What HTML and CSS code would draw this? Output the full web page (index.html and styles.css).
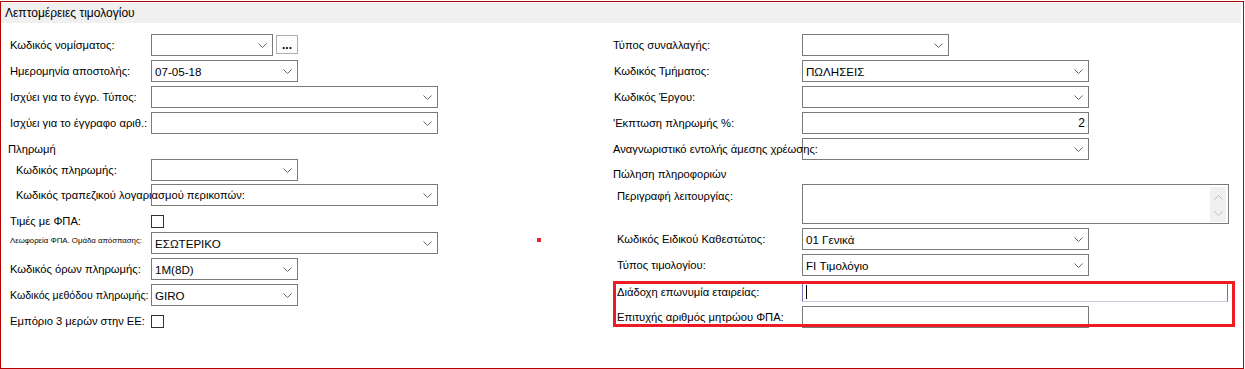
FILE: index.html
```html
<!DOCTYPE html>
<html lang="el">
<head>
<meta charset="utf-8">
<title>Λεπτομέρειες τιμολογίου</title>
<link rel="stylesheet" href="styles.css">
</head>
<body>
<div class="frame">
  <div class="header">Λεπτομέρειες τιμολογίου</div>
  <div class="body">
    <div class="col left">
      <div class="row">
        <span class="lbl">Κωδικός νομίσματος:</span>
        <span class="combo w122"><span class="val"></span><svg class="arr" width="9" height="5" viewBox="0 0 9 5"><path d="M0.5 0.5 L4.5 4.5 L8.5 0.5" /></svg></span>
        <span class="btn">...</span>
      </div>
      <div class="row">
        <span class="lbl">Ημερομηνία αποστολής:</span>
        <span class="combo w147"><span class="val">07-05-18</span><svg class="arr" width="9" height="5" viewBox="0 0 9 5"><path d="M0.5 0.5 L4.5 4.5 L8.5 0.5" /></svg></span>
      </div>
      <div class="row">
        <span class="lbl">Ισχύει για το έγγρ. Τύπος:</span>
        <span class="combo w287"><span class="val"></span><svg class="arr" width="9" height="5" viewBox="0 0 9 5"><path d="M0.5 0.5 L4.5 4.5 L8.5 0.5" /></svg></span>
      </div>
      <div class="row">
        <span class="lbl">Ισχύει για το έγγραφο αριθ.:</span>
        <span class="combo w287"><span class="val"></span><svg class="arr" width="9" height="5" viewBox="0 0 9 5"><path d="M0.5 0.5 L4.5 4.5 L8.5 0.5" /></svg></span>
      </div>
      <div class="section sec-left">Πληρωμή</div>
      <div class="row mb3">
        <span class="lbl ind6">Κωδικός πληρωμής:</span>
        <span class="combo w147"><span class="val"></span><svg class="arr" width="9" height="5" viewBox="0 0 9 5"><path d="M0.5 0.5 L4.5 4.5 L8.5 0.5" /></svg></span>
      </div>
      <div class="row">
        <span class="lbl ind6">Κωδικός τραπεζικού λογαριασμού περικοπών:</span>
        <span class="combo w287"><span class="val"></span><svg class="arr" width="9" height="5" viewBox="0 0 9 5"><path d="M0.5 0.5 L4.5 4.5 L8.5 0.5" /></svg></span>
      </div>
      <div class="row mb0">
        <span class="lbl">Τιμές με ΦΠΑ:</span>
        <span class="chk"></span>
      </div>
      <div class="row">
        <span class="lbl tiny">Λεωφορεία ΦΠΑ. Ομάδα απόσπασης:</span>
        <span class="combo w287"><span class="val">ΕΣΩΤΕΡΙΚΟ</span><svg class="arr" width="9" height="5" viewBox="0 0 9 5"><path d="M0.5 0.5 L4.5 4.5 L8.5 0.5" /></svg></span>
      </div>
      <div class="row">
        <span class="lbl">Κωδικός όρων πληρωμής:</span>
        <span class="combo w147"><span class="val">1M(8D)</span><svg class="arr" width="9" height="5" viewBox="0 0 9 5"><path d="M0.5 0.5 L4.5 4.5 L8.5 0.5" /></svg></span>
      </div>
      <div class="row">
        <span class="lbl small">Κωδικός μεθόδου πληρωμής:</span>
        <span class="combo w147"><span class="val">GIRO</span><svg class="arr" width="9" height="5" viewBox="0 0 9 5"><path d="M0.5 0.5 L4.5 4.5 L8.5 0.5" /></svg></span>
      </div>
      <div class="row">
        <span class="lbl">Εμπόριο 3 μερών στην ΕΕ:</span>
        <span class="chk"></span>
      </div>
    </div>

    <div class="col right">
      <div class="row">
        <span class="lbl rl">Τύπος συναλλαγής:</span>
        <span class="combo w147"><span class="val"></span><svg class="arr" width="9" height="5" viewBox="0 0 9 5"><path d="M0.5 0.5 L4.5 4.5 L8.5 0.5" /></svg></span>
      </div>
      <div class="row">
        <span class="lbl rl ind1">Κωδικός Τμήματος:</span>
        <span class="combo w287"><span class="val">ΠΩΛΗΣΕΙΣ</span><svg class="arr" width="9" height="5" viewBox="0 0 9 5"><path d="M0.5 0.5 L4.5 4.5 L8.5 0.5" /></svg></span>
      </div>
      <div class="row">
        <span class="lbl rl ind1">Κωδικός Έργου:</span>
        <span class="combo w287"><span class="val"></span><svg class="arr" width="9" height="5" viewBox="0 0 9 5"><path d="M0.5 0.5 L4.5 4.5 L8.5 0.5" /></svg></span>
      </div>
      <div class="row">
        <span class="lbl rl">'Εκπτωση πληρωμής %:</span>
        <span class="combo w287 num"><span class="val">2</span></span>
      </div>
      <div class="row">
        <span class="lbl rl">Αναγνωριστικό εντολής άμεσης χρέωσης:</span>
        <span class="combo w287"><span class="val"></span><svg class="arr" width="9" height="5" viewBox="0 0 9 5"><path d="M0.5 0.5 L4.5 4.5 L8.5 0.5" /></svg></span>
      </div>
      <div class="section sec-right">Πώληση πληροφοριών</div>
      <div class="row tall">
        <span class="lbl rl ind4 top">Περιγραφή λειτουργίας:</span>
        <span class="area w427">
          <span class="scroll">
            <svg width="9" height="5" viewBox="0 0 9 5"><path d="M0.5 4.5 L4.5 0.5 L8.5 4.5" /></svg>
            <svg width="9" height="5" viewBox="0 0 9 5"><path d="M0.5 0.5 L4.5 4.5 L8.5 0.5" /></svg>
          </span>
        </span>
      </div>
      <div class="row">
        <span class="lbl rl ind4">Κωδικός Ειδικού Καθεστώτος:</span>
        <span class="combo w287"><span class="val">01 Γενικά</span><svg class="arr" width="9" height="5" viewBox="0 0 9 5"><path d="M0.5 0.5 L4.5 4.5 L8.5 0.5" /></svg></span>
      </div>
      <div class="row mb6">
        <span class="lbl rl ind4">Τύπος τιμολογίου:</span>
        <span class="combo w287"><span class="val">FI Τιμολόγιο</span><svg class="arr" width="9" height="5" viewBox="0 0 9 5"><path d="M0.5 0.5 L4.5 4.5 L8.5 0.5" /></svg></span>
      </div>
      <div class="row h20">
        <span class="lbl rl ind4">Διάδοχη επωνυμία εταιρείας:</span>
        <span class="focus w426"><span class="caret"></span></span>
      </div>
      <div class="row">
        <span class="lbl rl ind4">Επιτυχής αριθμός μητρώου ΦΠΑ:</span>
        <span class="combo w287"></span>
      </div>
    </div>
  </div>
  <span class="dot"></span>
  <div class="highlight"></div>
</div>
</body>
</html>
```

FILE: styles.css
```css
html, body {
  margin: 0;
  padding: 0;
  background: #ffffff;
}

body {
  font-family: "Liberation Sans", Arial, sans-serif;
  font-size: 11.2px;
  color: #000000;
}

.frame {
  position: relative;
  margin-top: 1px;
  width: 1244px;
  height: 368px;
  box-sizing: border-box;
  border: 1px solid #b40000;
  padding-top: 1px;
}

.header {
  height: 20px;
  margin-right: 2px;
  background: #f0f0f0;
  padding-left: 4px;
  line-height: 21px;
  font-size: 12px;
}

.body {
  display: grid;
  grid-template-columns: 603px 1fr;
  padding-left: 9px;
  padding-top: 11px;
}

.col {
  display: flex;
  flex-direction: column;
}

.row {
  display: flex;
  align-items: center;
  height: 22px;
  margin-bottom: 4px;
}

.mb0 { margin-bottom: 0; }
.mb3 { margin-bottom: 3px; }
.mb6 { margin-bottom: 6px; }
.h20 { height: 20px; }

.tall {
  height: 40px;
  align-items: flex-start;
}

.lbl {
  position: relative;
  z-index: 1;
  flex: none;
  width: 141px;
  box-sizing: border-box;
  white-space: nowrap;
  line-height: 14px;
}

.rl { width: 189px; }
.ind1 { padding-left: 1px; }
.ind4 { padding-left: 4px; }
.ind6 { padding-left: 6px; }
.top { padding-top: 5px; }

.tiny {
  font-size: 7.8px;
  padding-bottom: 4px;
}

.small {
  font-size: 10.6px;
}

.section {
  line-height: 14px;
}

.sec-left {
  height: 21px;
  display: flex;
  align-items: center;
  margin-left: -2px;
}

.sec-right {
  height: 20px;
  display: flex;
  align-items: center;
}

.combo {
  flex: none;
  height: 22px;
  box-sizing: border-box;
  border: 1px solid #7a7a7a;
  background: #ffffff;
  display: flex;
  align-items: center;
  justify-content: space-between;
  padding: 0 5px 0 3px;
  font-size: 11.6px;
}

.combo.num {
  justify-content: flex-end;
  padding-right: 3px;
  font-size: 12px;
}

.w122 { width: 122px; }
.w147 { width: 147px; }
.w287 { width: 287px; }
.w426 { width: 426px; }
.w427 { width: 427px; }

.arr path,
.scroll path {
  fill: none;
  stroke: #666666;
  stroke-width: 1;
}

.scroll path {
  stroke: #bdbdbd;
}

.btn {
  flex: none;
  width: 22px;
  height: 19px;
  margin-left: 3px;
  align-self: flex-start;
  margin-top: 1px;
  box-sizing: border-box;
  border: 1px solid #adadad;
  background: #fdfdfd;
  font-weight: bold;
  font-size: 12px;
  line-height: 19px;
  text-align: center;
}

.chk {
  flex: none;
  width: 13px;
  height: 13px;
  box-sizing: border-box;
  border: 1px solid #333333;
  background: #ffffff;
}

.area {
  flex: none;
  height: 40px;
  box-sizing: border-box;
  border: 1px solid #7a7a7a;
  background: #ffffff;
  display: flex;
  justify-content: flex-end;
  padding: 2px 2px 1px 0;
}

.scroll {
  width: 16px;
  background: #f0f0f0;
  display: flex;
  flex-direction: column;
  align-items: center;
  justify-content: space-between;
  padding: 8px 0 6px;
  box-sizing: border-box;
}

.focus {
  flex: none;
  height: 20px;
  box-sizing: border-box;
  border: 1px solid #c9c9dd;
  border-left-color: #7272b4;
  border-right-color: #7272b4;
  background: #ffffff;
  display: flex;
  align-items: center;
  padding-left: 3px;
}

.caret {
  width: 1px;
  height: 14px;
  background: #000000;
}

.dot {
  position: absolute;
  left: 536px;
  top: 236px;
  width: 4px;
  height: 4px;
  background: #e8232a;
}

.highlight {
  position: absolute;
  z-index: 2;
  left: 612px;
  top: 279px;
  width: 622px;
  height: 46px;
  box-sizing: border-box;
  border: 3px solid #ed1c24;
}
```
